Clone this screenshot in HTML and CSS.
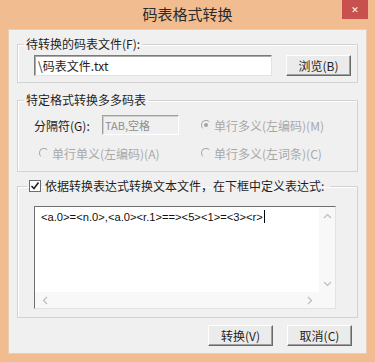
FILE: index.html
```html
<!DOCTYPE html>
<html lang="zh-CN">

<head>
    <meta charset="UTF-8">
    <title>码表格式转换</title>
    <link rel="stylesheet" href="styles.css">
</head>

<body>
    <div class="window">
        <div class="titlebar">
            <span class="title">码表格式转换</span>
            <button class="close" type="button">&#x2715;</button>
        </div>

        <div class="client">
            <fieldset class="group">
                <legend>待转换的码表文件(F):</legend>
                <div class="file-row">
                    <div class="textbox file-box">\码表文件.txt</div>
                    <button class="btn" type="button">浏览(B)</button>
                </div>
            </fieldset>

            <fieldset class="group">
                <legend>特定格式转换多多码表</legend>
                <div class="format-grid">
                    <div class="sep-cell">
                        <span class="sep-label">分隔符(G):</span>
                        <div class="textbox sep-box">TAB,空格</div>
                    </div>
                    <label class="radio disabled"><span class="dot checked"></span>单行多义(左编码)(M)</label>
                    <label class="radio disabled indent"><span class="dot"></span>单行单义(左编码)(A)</label>
                    <label class="radio disabled"><span class="dot"></span>单行多义(左词条)(C)</label>
                </div>
            </fieldset>

            <fieldset class="group">
                <legend class="check-legend">
                    <svg class="checkbox" width="12" height="12" viewBox="0 0 12 12">
                        <rect x="0.5" y="0.5" width="11" height="11" fill="#fff" stroke="#6d6d6d"/>
                        <polyline points="2.5,6 5,8.5 9.5,2.5" fill="none" stroke="#222" stroke-width="1.6"/>
                    </svg>
                    依据转换表达式转换文本文件，在下框中定义表达式:
                </legend>
                <div class="expr-wrap">
                    <div class="editor">
                        <div class="editor-text">&lt;a.0&gt;=&lt;n.0&gt;,&lt;a.0&gt;&lt;r.1&gt;==&gt;&lt;5&gt;&lt;1&gt;=&lt;3&gt;&lt;r&gt;<span class="caret"></span></div>
                        <div class="vscroll">
                            <svg width="9" height="6" viewBox="0 0 9 6"><polyline points="1,5 4.5,1.5 8,5" fill="none" stroke="#bdbdbd" stroke-width="1.2"/></svg>
                            <svg width="9" height="6" viewBox="0 0 9 6"><polyline points="1,1 4.5,4.5 8,1" fill="none" stroke="#bdbdbd" stroke-width="1.2"/></svg>
                        </div>
                        <div class="hscroll">
                            <svg width="6" height="9" viewBox="0 0 6 9"><polyline points="5,1 1.5,4.5 5,8" fill="none" stroke="#bdbdbd" stroke-width="1.2"/></svg>
                            <svg width="6" height="9" viewBox="0 0 6 9"><polyline points="1,1 4.5,4.5 1,8" fill="none" stroke="#bdbdbd" stroke-width="1.2"/></svg>
                        </div>
                        <div class="corner"></div>
                    </div>
                </div>
            </fieldset>

            <div class="actions">
                <button class="btn" type="button">转换(V)</button>
                <button class="btn" type="button">取消(C)</button>
            </div>
        </div>
    </div>
</body>

</html>
```

FILE: styles.css
```css
* {
    margin: 0;
    padding: 0;
    box-sizing: border-box;
}

body {
    width: 375px;
    height: 362px;
    overflow: hidden;
    font-family: "Noto Sans CJK SC", "Liberation Sans", sans-serif;
    font-size: 12px;
    color: #1e1e1e;
}

.window {
    width: 375px;
    height: 362px;
    background-color: #f1bc90;
    padding: 0 8px 8px;
    display: flex;
    flex-direction: column;
}

.titlebar {
    height: 29px;
    position: relative;
    display: flex;
    align-items: center;
    justify-content: center;
}

.title {
    font-size: 15px;
    color: #2b2b2b;
    line-height: 20px;
    margin-top: -1px;
}

.close {
    position: absolute;
    top: 0;
    right: -1px;
    width: 26px;
    height: 19px;
    border: none;
    background-color: #c8504e;
    color: #fff;
    font-size: 9px;
    font-weight: bold;
    font-family: "DejaVu Sans", sans-serif;
}

.client {
    flex: 1;
    background-color: #f0f0f0;
    padding: 7px 9px 8px;
    display: flex;
    flex-direction: column;
    box-shadow: inset 0 0 0 1px #e9cdb4;
}

.group {
    border: 1px solid #d3d3d3;
    box-shadow: inset 1px 1px 0 #fff;
}

.group + .group {
    margin-top: 9px;
}

.group:nth-of-type(3) {
    margin-top: 6px;
}

legend {
    margin-left: 6px;
    padding: 0 2px;
    line-height: 16px;
}

.check-legend {
    display: flex;
    align-items: center;
    gap: 4px;
    margin-left: 9px;
    padding-right: 6px;
}

.checkbox {
    display: block;
}

.file-row {
    display: flex;
    gap: 14px;
    padding: 3px 6px 6px 16px;
}

.textbox {
    height: 21px;
    background-color: #fff;
    border: 1px solid;
    border-color: #7b7b7b #e3e3e3 #e3e3e3 #7b7b7b;
    box-shadow: inset 1px 1px 0 #a9a9a9;
    padding: 0 3px;
    line-height: 19px;
}

.file-box {
    width: 238px;
}

.btn {
    width: 65px;
    height: 21px;
    font-family: "Noto Sans CJK SC", "Liberation Sans", sans-serif;
    font-size: 12px;
    color: #1e1e1e;
    background-color: #ebebeb;
    border: 1px solid;
    border-color: #fff #696969 #696969 #fff;
    box-shadow: inset -1px -1px 0 #a0a0a0;
}

.format-grid {
    display: grid;
    grid-template-columns: 167px auto;
    grid-auto-rows: 20px;
    row-gap: 8px;
    padding: 7px 0 8px 16px;
}

.sep-cell {
    display: flex;
    align-items: center;
}

.sep-label {
    width: 68px;
}

.sep-box {
    width: 77px;
    height: 20px;
    background-color: #f0f0f0;
    color: #8d8d8d;
    font-size: 11px;
    line-height: 18px;
    border-color: #a0a0a0 #ffffff #ffffff #a0a0a0;
    box-shadow: inset 1px 1px 0 #d0d0d0;
    padding: 0 2px;
}

.radio {
    display: flex;
    align-items: center;
    gap: 3px;
}

.radio.indent {
    padding-left: 5px;
}

.disabled {
    color: #a8a8a8;
}

.dot {
    width: 10px;
    height: 10px;
    border-radius: 50%;
    border: 1px solid;
    border-color: #a6a6a6 #ececec #ececec #a6a6a6;
    position: relative;
}

.dot.checked::after {
    content: "";
    position: absolute;
    left: 2px;
    top: 2px;
    width: 4px;
    height: 4px;
    border-radius: 50%;
    background-color: #a3a3a3;
}

.expr-wrap {
    padding: 12px 0 8px 16px;
}

.editor {
    width: 302px;
    height: 103px;
    background-color: #fff;
    border: 1px solid;
    border-color: #6f6f6f #e3e3e3 #e3e3e3 #6f6f6f;
    display: grid;
    grid-template-columns: 1fr 16px;
    grid-template-rows: 1fr 16px;
}

.editor-text {
    padding: 3px 5px 2px 6px;
    font-family: "Liberation Sans", sans-serif;
    font-size: 11.2px;
    line-height: 14px;
    color: #111;
}

.caret {
    display: inline-block;
    width: 1px;
    height: 13px;
    background-color: #000;
    vertical-align: -2px;
    margin-left: 1px;
}

.vscroll {
    background-color: #f8f8f8;
    display: flex;
    flex-direction: column;
    justify-content: space-between;
    align-items: center;
    padding: 6px 0 5px;
}

.hscroll {
    background-color: #f8f8f8;
    display: flex;
    justify-content: space-between;
    align-items: center;
    padding: 0 6px 0 7px;
}

.corner {
    background-color: #f8f8f8;
}

.actions {
    display: flex;
    justify-content: flex-end;
    gap: 14px;
    margin-top: 7px;
    margin-right: 6px;
}
```
